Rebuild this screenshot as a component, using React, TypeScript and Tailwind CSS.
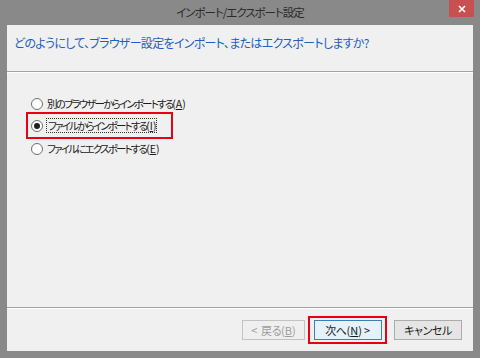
import React from "react";

const font = "font-['Meiryo_UI','Noto_Sans_CJK_JP',sans-serif] [font-feature-settings:'palt']";

function Radio({ checked }: { checked?: boolean }) {
  return (
    <span className="flex h-[12px] w-[12px] shrink-0 items-center justify-center rounded-full border border-[#6e6e6e] bg-white">
      {checked && <span className="h-[6px] w-[6px] rounded-full bg-[#1f1f1f]" />}
    </span>
  );
}

// access key suffix like "(A)" with normal spacing
function Key({ k }: { k: string }) {
  return (
    <span className="tracking-normal">
      (<span className="underline">{k}</span>)
    </span>
  );
}

export default function App() {
  return (
    <div className={`flex h-[358px] w-[480px] flex-col bg-[#898989] ${font}`}>
      {/* title bar */}
      <div className="relative flex h-[25px] shrink-0 items-center justify-center">
        <span className="whitespace-nowrap text-[11.5px] tracking-[-1px] text-[#2b2b2b]">
          インポート/エクスポート設定
        </span>
        <div className="absolute right-[6px] top-0 flex h-[17px] w-[25px] items-center justify-center bg-[#c75050]">
          <svg width="8" height="8" viewBox="0 0 8 8">
            <path d="M1 1L7 7M7 1L1 7" stroke="#fff" strokeWidth="1.6" />
          </svg>
        </div>
      </div>

      {/* window body */}
      <div className="mx-[7px] mb-[7px] flex flex-1 flex-col bg-[#f0f0f0]">
        <div className="h-[46px] shrink-0 whitespace-nowrap pl-[7px] pt-[9px] text-[12px] tracking-[-0.7px] text-[#1e5fbf]">
          どのようにして、ブラウザー設定をインポート、またはエクスポートしますか?
        </div>
        <div className="h-px bg-[#a3a3a3]" />
        <div className="h-px bg-white" />

        <div className="flex flex-1 flex-col whitespace-nowrap pl-[19px] pt-[23px] text-[10.5px] tracking-[-1.8px] text-[#1a1a1a]">
          <div className="flex h-[16px] items-center gap-[4px] pl-[5px]">
            <Radio />
            <span>
              別のブラウザーからインポートする<Key k="A" />
            </span>
          </div>
          <div className="flex h-[27px] w-[147px] items-center gap-[3px] border-2 border-[#e60012] pl-[3px]">
            <Radio checked />
            <span className="border border-dotted border-[#333] pl-px leading-[13px]">
              ファイルからインポートする<Key k="I" />
            </span>
          </div>
          <div className="flex h-[20px] items-center gap-[4px] pl-[5px]">
            <Radio />
            <span>
              ファイルにエクスポートする<Key k="E" />
            </span>
          </div>
        </div>

        <div className="h-px bg-[#a3a3a3]" />
        <div className="h-px bg-white" />
        <div className="flex h-[42px] shrink-0 items-center justify-end whitespace-nowrap pr-[11px] text-[11px] tracking-[-0.4px]">
          <button className="flex h-[20px] w-[63px] items-center justify-center border border-[#c3c3c3] bg-[#efefef] text-[#9d9d9d]">
            &lt;&nbsp;&nbsp;戻る<Key k="B" />
          </button>
          <div className="ml-[3px] flex h-[28px] w-[79px] items-center justify-center border-2 border-[#e60012]">
            <button className="flex h-[20px] w-[68px] items-center justify-center border border-[#3c7fb1] bg-[#e5f1fb] text-[#1a1a1a]">
              次へ<Key k="N" />&nbsp;&gt;
            </button>
          </div>
          <button className="ml-[7px] flex h-[20px] w-[68px] items-center justify-center border border-[#acacac] bg-[#e5e5e5] text-[#1a1a1a]">
            キャンセル
          </button>
        </div>
      </div>
    </div>
  );
}
